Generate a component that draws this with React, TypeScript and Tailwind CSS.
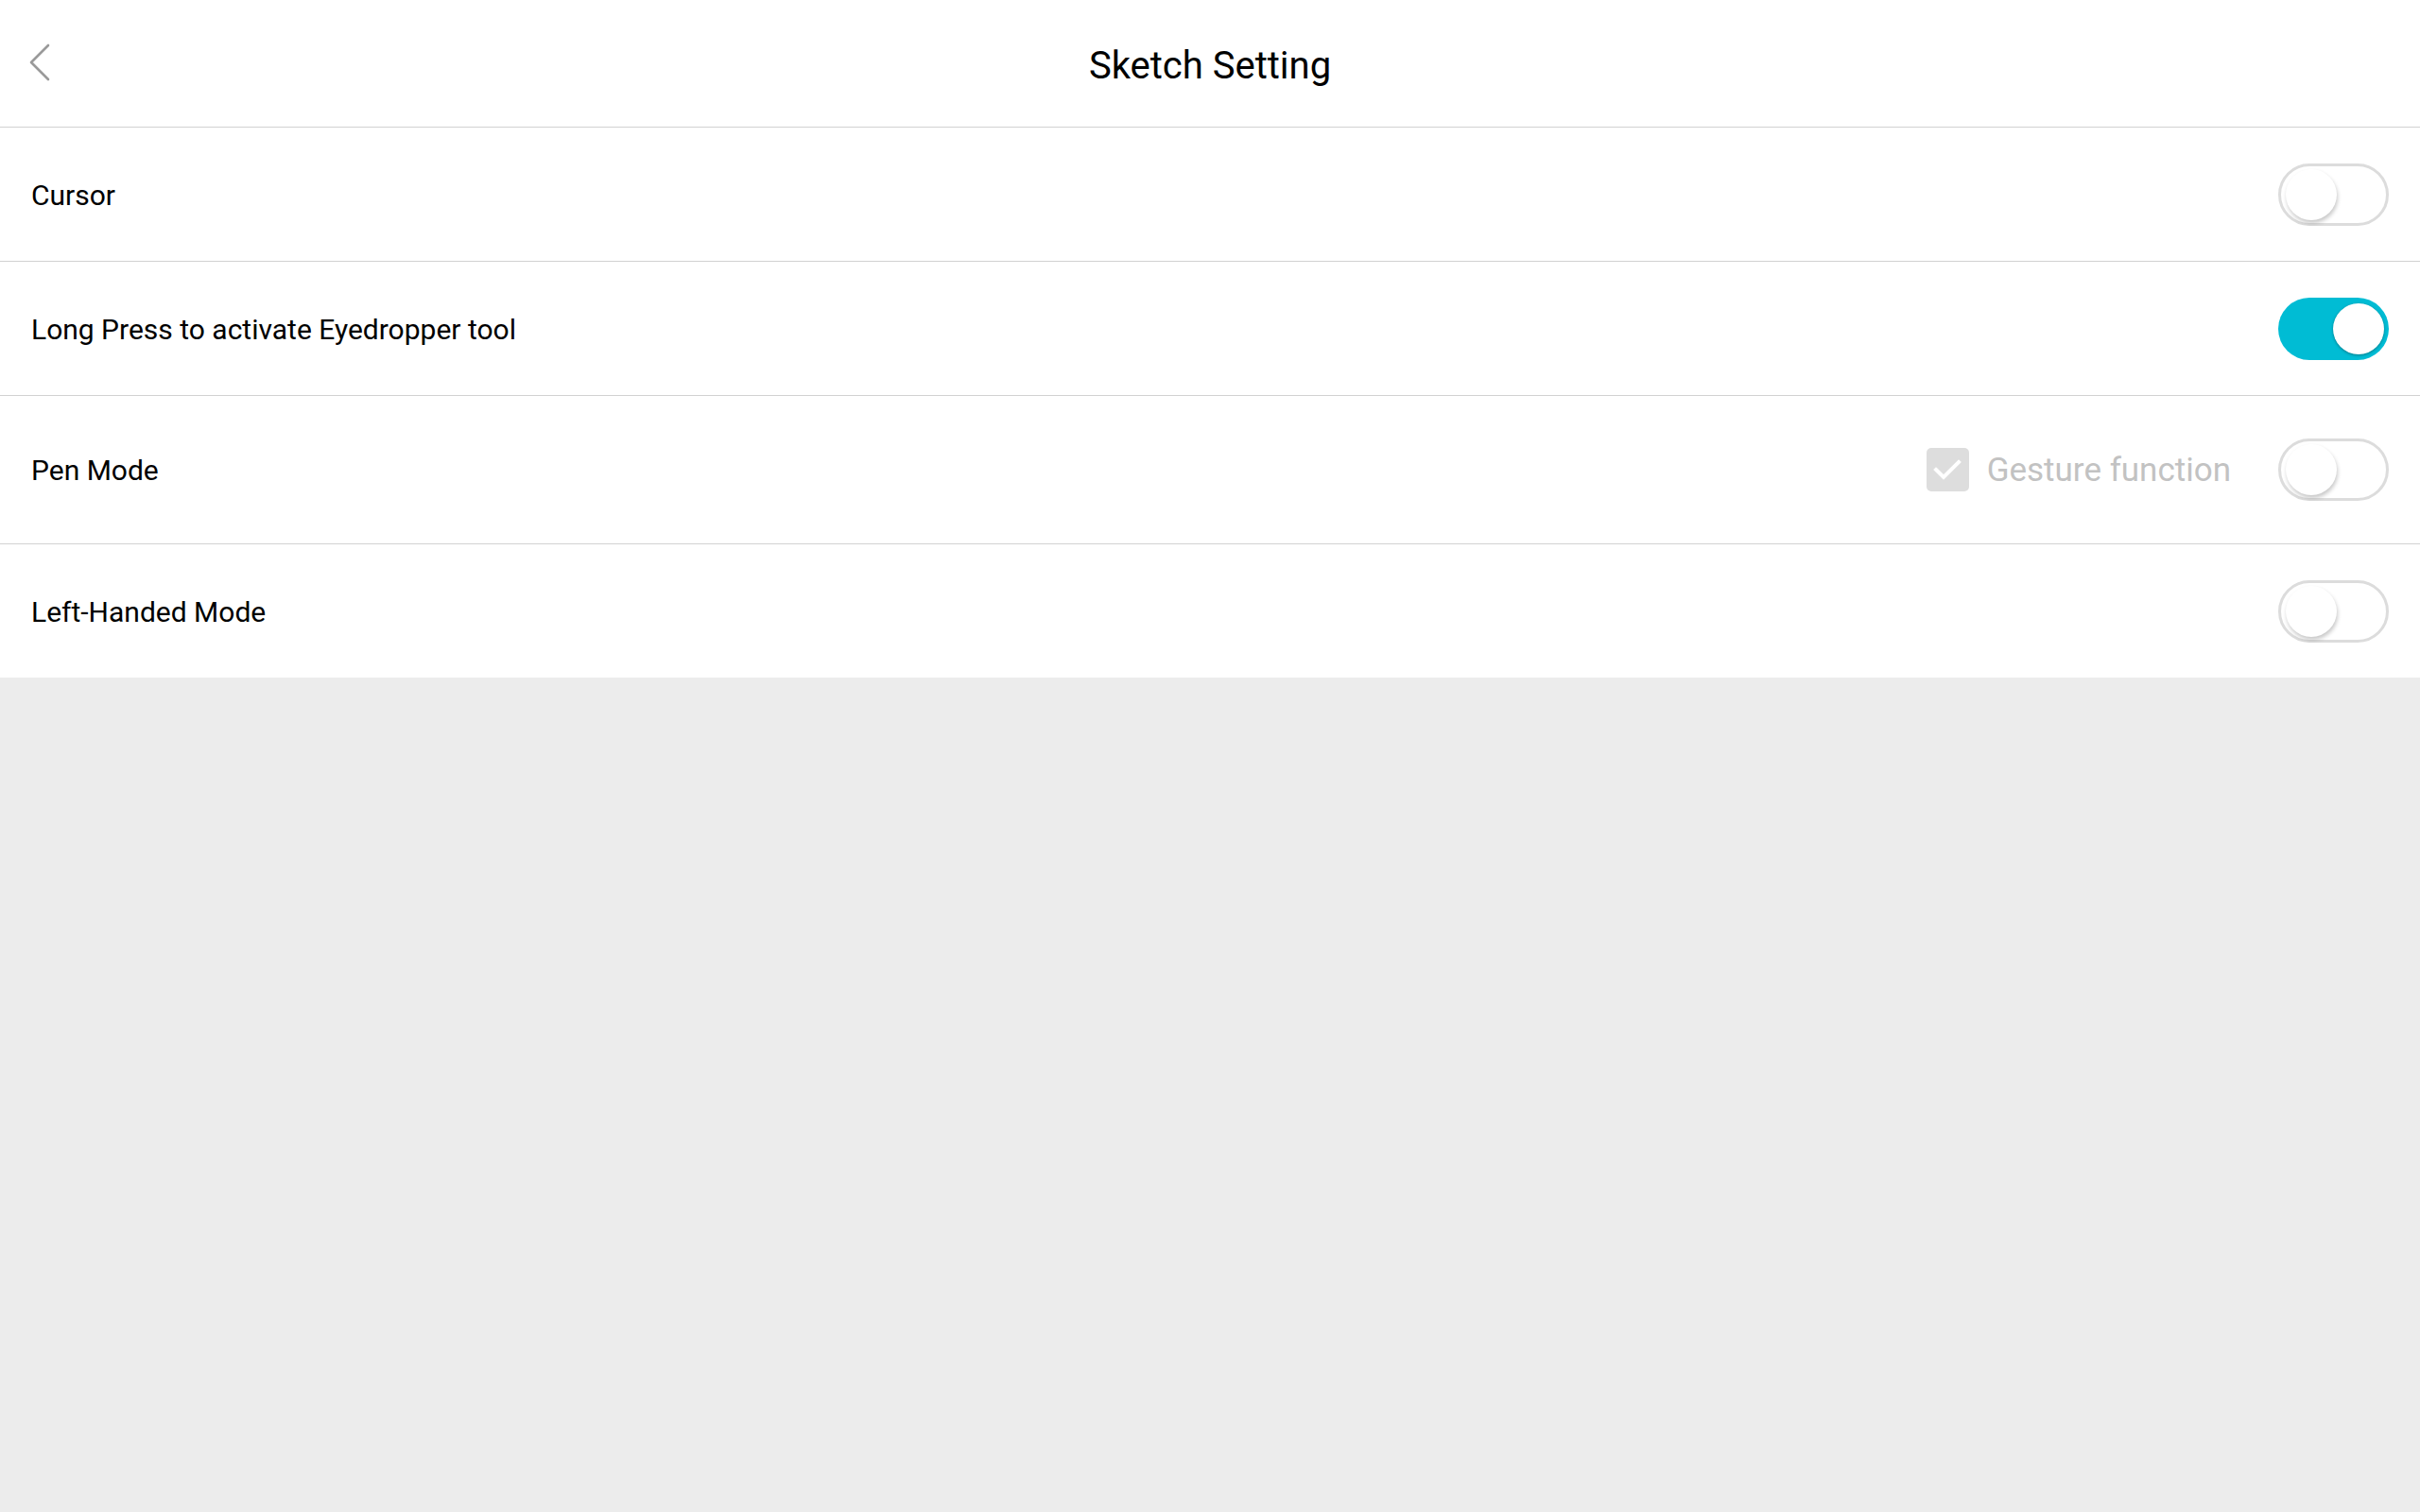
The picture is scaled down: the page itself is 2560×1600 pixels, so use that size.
import { useState } from "react";

function Toggle({ on, onChange }: { on: boolean; onChange: () => void }) {
  return (
    <button
      onClick={onChange}
      className={`relative flex h-[66px] w-[117px] shrink-0 items-center rounded-full px-[5px] ${
        on
          ? "justify-end bg-[#00bcd4]"
          : "justify-start border-[3px] border-[#dcdcdc] bg-white px-[2px]"
      }`}
    >
      <span
        className={`block h-[54px] w-[54px] rounded-full bg-white ${
          on
            ? "shadow-[0_1px_3px_rgba(0,0,0,0.35)]"
            : "shadow-[1px_3px_4px_rgba(0,0,0,0.22)]"
        }`}
      />
    </button>
  );
}

function Row({
  label,
  height,
  last,
  children,
}: {
  label: string;
  height: string;
  last?: boolean;
  children: React.ReactNode;
}) {
  return (
    <div
      className={`flex items-center justify-between pl-[33px] pr-[33px] ${height} ${
        last ? "" : "border-b border-[#d2d2d2]"
      }`}
    >
      <span className="pt-[1px] text-[30px] text-black">{label}</span>
      {children}
    </div>
  );
}

export default function App() {
  const [cursor, setCursor] = useState(false);
  const [eyedropper, setEyedropper] = useState(true);
  const [pen, setPen] = useState(false);
  const [gesture, setGesture] = useState(true);
  const [leftHanded, setLeftHanded] = useState(false);

  return (
    <div
      className="flex min-h-[1600px] w-full flex-col bg-[#ececec]"
      style={{ fontFamily: "Roboto, 'Noto Sans', sans-serif" }}
    >
      <div className="bg-white">
        <div className="relative flex h-[135px] items-center justify-center border-b border-[#d2d2d2]">
          <button className="absolute left-[26px] top-[41px] p-1" aria-label="Back">
            <svg width="26" height="42" viewBox="0 0 26 42" fill="none">
              <path
                d="M21 3 L3 21 L21 39"
                stroke="#9a9a9a"
                strokeWidth="2.6"
                strokeLinecap="round"
                strokeLinejoin="round"
              />
            </svg>
          </button>
          <h1 className="pt-[6px] text-[40px] text-black">Sketch Setting</h1>
        </div>

        <Row label="Cursor" height="h-[142px]">
          <Toggle on={cursor} onChange={() => setCursor(!cursor)} />
        </Row>
        <Row label="Long Press to activate Eyedropper tool" height="h-[142px]">
          <Toggle on={eyedropper} onChange={() => setEyedropper(!eyedropper)} />
        </Row>
        <Row label="Pen Mode" height="h-[157px]">
          <div className="flex items-center">
            <button
              onClick={() => setGesture(!gesture)}
              className="flex items-center gap-[19px]"
            >
              <span className="flex h-[46px] w-[45px] items-center justify-center rounded-[5px] bg-[#dddddd]">
                {gesture && (
                  <svg width="34" height="34" viewBox="0 0 34 34" fill="none">
                    <path
                      d="M5 17 L13 25 L29 9"
                      stroke="white"
                      strokeWidth="4"
                      strokeLinecap="square"
                    />
                  </svg>
                )}
              </span>
              <span className="pt-[3px] text-[35px] text-[#c2c2c2]">Gesture function</span>
            </button>
            <div className="ml-[50px]">
              <Toggle on={pen} onChange={() => setPen(!pen)} />
            </div>
          </div>
        </Row>
        <Row label="Left-Handed Mode" height="h-[141px]" last>
          <Toggle on={leftHanded} onChange={() => setLeftHanded(!leftHanded)} />
        </Row>
      </div>
    </div>
  );
}
